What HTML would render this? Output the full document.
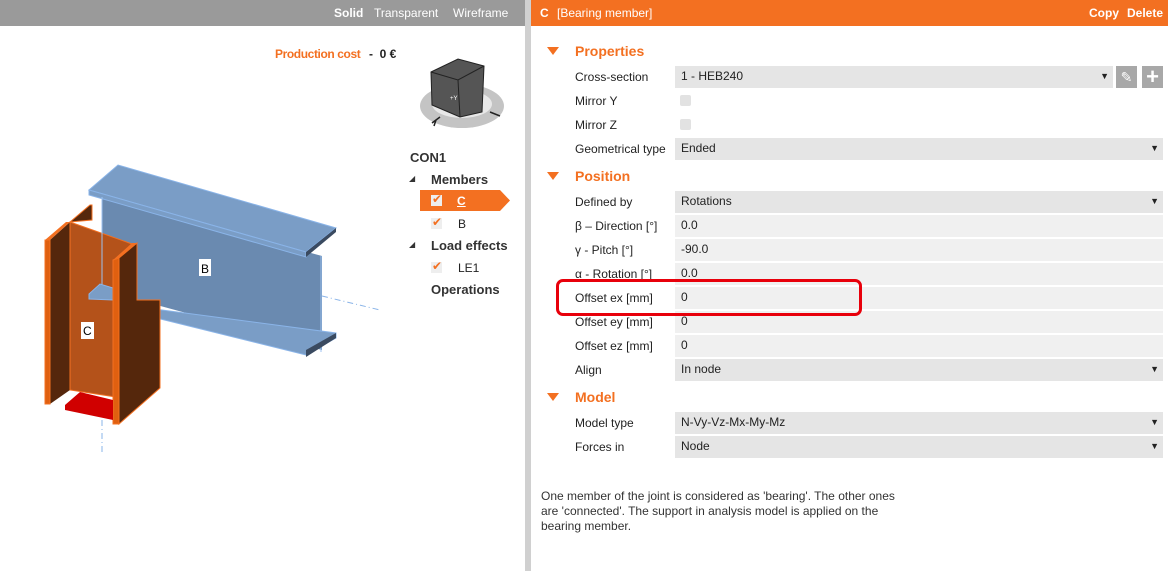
<!DOCTYPE html>
<html><head><meta charset="utf-8"><style>
*{margin:0;padding:0;box-sizing:border-box}
body{width:1168px;height:571px;overflow:hidden;background:#fff;font-family:"Liberation Sans",sans-serif;font-size:12px;color:#222;position:relative}
.a{position:absolute;white-space:nowrap}
.lbl{position:absolute;left:575px;font-size:12px;color:#222}
.fld{position:absolute;left:675px;width:488px;height:22px;padding-left:6px;line-height:21px;font-size:12px}
.dd{background:#e5e5e5}
.tx{background:#f0f0f0}
.arr{position:absolute;right:4px;top:0;font-size:9px}
.hd{position:absolute;left:575px;color:#f37021;font-weight:bold;font-size:14px}
.tri{position:absolute;left:547px;width:0;height:0;border-left:6px solid transparent;border-right:6px solid transparent;border-top:8px solid #f37021}
.cb{position:absolute;left:680px;width:11px;height:11px;background:#e2e2e2;border-radius:2px}
</style></head><body>
<div class="a" style="left:0;top:0;width:525px;height:26px;background:#9a9a9a"></div>
<div class="a" style="left:334px;top:6px;color:#fff;font-weight:bold">Solid</div>
<div class="a" style="left:374px;top:6px;color:#fff">Transparent</div>
<div class="a" style="left:453px;top:6px;color:#fff">Wireframe</div>
<div class="a" style="left:525px;top:0;width:6px;height:571px;background:#d0d0d0"></div>
<div class="a" style="left:531px;top:0;width:637px;height:26px;background:#f37021"></div>
<div class="a" style="left:540px;top:6px;color:#fff;font-weight:bold">C</div>
<div class="a" style="left:557px;top:6px;color:#fff">[Bearing member]</div>
<div class="a" style="left:1089px;top:6px;color:#fff;font-weight:bold">Copy</div>
<div class="a" style="left:1127px;top:6px;color:#fff;font-weight:bold">Delete</div>

<div class="a" style="left:275px;top:47px;color:#f37021;font-weight:bold;letter-spacing:-0.4px">Production cost</div>
<div class="a" style="left:369px;top:47px;font-weight:bold">- &nbsp;0 €</div>

<svg class="a" style="left:0;top:0" width="525" height="571">
 <ellipse cx="462" cy="106" rx="42" ry="22" fill="#c4c4c4"/>
 <ellipse cx="462" cy="104" rx="30" ry="14" fill="#e8e8e8"/>
 <polygon points="431,72 458,59 484,66 482,112 460,117 432,105" fill="#555" stroke="#222"/>
 <polyline points="431,72 458,80 484,66" fill="none" stroke="#222"/>
 <line x1="458" y1="80" x2="460" y2="117" stroke="#222"/>
 <text x="450" y="100" font-size="6" fill="#fff">+Y</text>
 <path d="M432,123 l8,-6 M436,120 l-2,6 M490,112 l10,4" stroke="#222" stroke-width="1.5"/>
 <polygon points="102,196 322,256 322,350 102,290" fill="#6a8ab0"/>
 <polygon points="89,190 118,165 336,228 306,252" fill="#7a9dc6" stroke="#8ab4e8"/>
 <polygon points="89,190 306,252 306,257 89,195" fill="#7a9dc6" stroke="#8ab4e8"/>
 <polygon points="306,252 336,228 336,232 306,257" fill="#3a4a60"/>
 <line x1="321" y1="256" x2="321" y2="352" stroke="#9cc2f0"/>
 <polygon points="124,305 336,333 336,338 306,355 124,310" fill="#7a9dc6" stroke="#8ab4e8"/>
 <polygon points="306,350 336,333 336,338 306,357" fill="#3a4a60"/>
 <line x1="322" y1="296" x2="380" y2="310" stroke="#8ab4e8" stroke-dasharray="6,3,1,3"/>
 <rect x="199" y="259" width="12" height="17" fill="#fff"/><text x="201" y="273" font-size="12">B</text>
 <polygon points="50,240 70,222 70,390 50,404" fill="#55270c"/>
 <polygon points="70,222 90,205 92,205 92,220" fill="#55270c" stroke="#f37021"/>
 <polygon points="70,222 135,245 135,400 70,390" fill="#b4521a" stroke="#f37021"/>
 <line x1="102" y1="197" x2="102" y2="288" stroke="#9cc2f0"/>
 <polygon points="89,294 100,284 113,288 113,300 89,299" fill="#7a9dc6" stroke="#8ab4e8"/>
 <polygon points="119,258 137,243 137,300 160,300 160,388 119,424" fill="#55270c" stroke="#f37021"/>
 <polygon points="45,240 50,240 50,404 45,404" fill="#e06010" stroke="#f37021"/>
 <polygon points="45,240 66,222 70,222 50,240" fill="#f37021"/>
 <polygon points="113,260 119,258 119,424 113,424" fill="#e06010" stroke="#f37021"/>
 <polygon points="113,260 132,243 137,243 119,258" fill="#f37021"/>
 <polygon points="65,405 80,392 113,400 113,420 65,410" fill="#d00000"/>
 <line x1="102" y1="420" x2="102" y2="455" stroke="#8ab4e8" stroke-dasharray="6,3,1,3"/>
 <rect x="81" y="322" width="13" height="17" fill="#fff"/><text x="83" y="335" font-size="12">C</text>
</svg>

<div class="a" style="left:410px;top:150px;font-weight:bold;font-size:13px;color:#333">CON1</div>
<div class="a" style="left:409px;top:174px;font-size:8px;color:#333">◢</div>
<div class="a" style="left:431px;top:172px;font-weight:bold;font-size:13px;color:#333">Members</div>
<svg class="a" style="left:420px;top:190px" width="92" height="21"><polygon points="0,0 80,0 90,10.5 80,21 0,21" fill="#f37021"/></svg>
<div class="a" style="left:431px;top:195px;width:11px;height:11px;background:#eee"></div><div class="a" style="left:432px;top:192px;color:#f37021;font-size:12px">✔</div>
<div class="a" style="left:457px;top:194px;color:#fff;font-weight:bold;text-decoration:underline">C</div>
<div class="a" style="left:431px;top:218px;width:11px;height:11px;background:#eee"></div><div class="a" style="left:432px;top:215px;color:#f37021;font-size:12px">✔</div>
<div class="a" style="left:458px;top:217px">B</div>
<div class="a" style="left:409px;top:240px;font-size:8px;color:#333">◢</div>
<div class="a" style="left:431px;top:238px;font-weight:bold;font-size:13px;color:#333">Load effects</div>
<div class="a" style="left:431px;top:262px;width:11px;height:11px;background:#eee"></div><div class="a" style="left:432px;top:259px;color:#f37021;font-size:12px">✔</div>
<div class="a" style="left:458px;top:261px">LE1</div>
<div class="a" style="left:431px;top:282px;font-weight:bold;font-size:13px;color:#333">Operations</div>

<div class="tri" style="top:47px"></div><div class="hd" style="top:43px">Properties</div>
<div class="lbl" style="top:70px">Cross-section</div>
<div class="fld dd" style="top:66px;width:438px">1 - HEB240<span class="arr">▼</span></div>
<div class="a" style="left:1116px;top:66px;width:21px;height:22px;background:#a8a8a8;color:#fff;text-align:center;line-height:22px;font-size:14px">✎</div>
<div class="a" style="left:1142px;top:66px;width:21px;height:22px;background:#a8a8a8;color:#fff;text-align:center;line-height:21px;font-size:22px;font-weight:bold">+</div>
<div class="lbl" style="top:94px">Mirror Y</div><div class="cb" style="top:95px"></div>
<div class="lbl" style="top:118px">Mirror Z</div><div class="cb" style="top:119px"></div>
<div class="lbl" style="top:142px">Geometrical type</div>
<div class="fld dd" style="top:138px">Ended<span class="arr">▼</span></div>

<div class="tri" style="top:172px"></div><div class="hd" style="top:168px">Position</div>
<div class="lbl" style="top:195px">Defined by</div><div class="fld dd" style="top:191px">Rotations<span class="arr">▼</span></div>
<div class="lbl" style="top:219px">β – Direction [°]</div><div class="fld tx" style="top:215px">0.0</div>
<div class="lbl" style="top:243px">γ - Pitch [°]</div><div class="fld tx" style="top:239px">-90.0</div>
<div class="lbl" style="top:267px">α - Rotation [°]</div><div class="fld tx" style="top:263px">0.0</div>
<div class="lbl" style="top:291px">Offset ex [mm]</div><div class="fld tx" style="top:287px">0</div>
<div class="lbl" style="top:315px">Offset ey [mm]</div><div class="fld tx" style="top:311px">0</div>
<div class="lbl" style="top:339px">Offset ez [mm]</div><div class="fld tx" style="top:335px">0</div>
<div class="lbl" style="top:363px">Align</div><div class="fld dd" style="top:359px">In node<span class="arr">▼</span></div>
<div class="a" style="left:556px;top:279px;width:306px;height:37px;border:3px solid #e8000b;border-radius:7px"></div>

<div class="tri" style="top:393px"></div><div class="hd" style="top:389px">Model</div>
<div class="lbl" style="top:416px">Model type</div><div class="fld dd" style="top:412px">N-Vy-Vz-Mx-My-Mz<span class="arr">▼</span></div>
<div class="lbl" style="top:440px">Forces in</div><div class="fld dd" style="top:436px">Node<span class="arr">▼</span></div>

<div class="a" style="left:541px;top:489px;line-height:15px;color:#333;white-space:normal;width:360px">One member of the joint is considered as 'bearing'. The other ones are 'connected'. The support in analysis model is applied on the bearing member.</div>
</body></html>
